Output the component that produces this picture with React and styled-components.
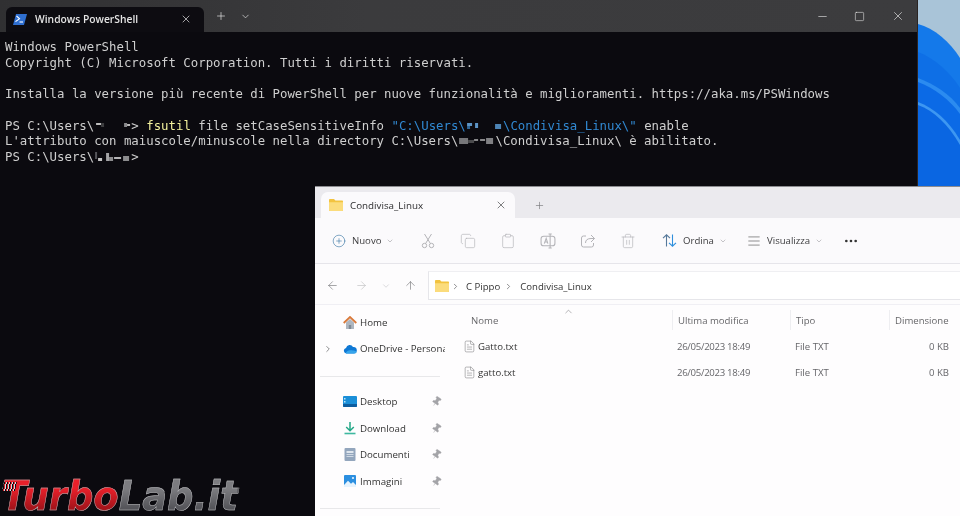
import styled, { createGlobalStyle } from "styled-components";
import {
  ArrowLeft, ArrowRight, ArrowUp, AlignJustify, ChevronDown, ChevronRight, ChevronUp,
  CirclePlus, Clipboard, Copy, FileText, Minus, MoreHorizontal, Pin, Plus,
  Square, Trash2, X,
} from "lucide-react";

const GlobalStyle = createGlobalStyle`
  html, body { margin: 0; padding: 0; background: #0b0a0f; }
  * { box-sizing: border-box; }
`;

const Desktop = styled.div`
  position: relative;
  width: 960px;
  height: 516px;
  overflow: hidden;
  background: #0a6de8;
  font-family: "Open Sans", "Noto Sans", sans-serif;
  filter: blur(0.35px);
`;

const Wallpaper = styled.svg`
  position: absolute;
  top: 0;
  right: 0;
  width: 42px;
  height: 190px;
`;

const TerminalWindow = styled.section`
  position: absolute;
  top: 0;
  left: 0;
  width: 918px;
  height: 516px;
  display: flex;
  flex-direction: column;
  background: #0b0a0f;
  border-right: 1px solid #2b2422;
`;

const TermBar = styled.header`
  height: 32px;
  flex: none;
  display: flex;
  align-items: flex-end;
  padding-left: 6px;
  background: linear-gradient(90deg, #303032, #3b3b3d 40%, #3c3c3e);
  color: #e8e8e8;
`;

const TermTab = styled.div`
  width: 198px;
  height: 25px;
  display: flex;
  align-items: center;
  padding: 0 12px 1px 7px;
  background: #0d0c11;
  border-radius: 6px 6px 0 0;
  font-size: 10.3px;
  font-weight: 600;
  color: #e4e4e4;
`;

const TabLabel = styled.span`
  flex: 1;
  margin-left: 8px;
`;

const BarButton = styled.span`
  display: flex;
  align-items: center;
  justify-content: center;
  align-self: center;
  width: ${(p) => p.$w}px;
  margin-left: ${(p) => p.$ml || 0}px;
  color: #eeeeee;
`;

const Console = styled.pre`
  flex: 1;
  margin: 0;
  padding: 8px 5px;
  font-family: "DejaVu Sans Mono", "Liberation Mono", monospace;
  font-size: 12.35px;
  line-height: 15.7px;
  color: #cfcfcf;
`;

const Keyword = styled.span`
  color: #f3f19d;
`;

const Quoted = styled.span`
  color: #3189d2;
`;

const MosaicBox = styled.svg`
  display: inline-block;
  width: ${(p) => p.$chars}ch;
  height: 12px;
  vertical-align: -2px;
`;

const Mosaic = ({ chars, cells }) => (
  <MosaicBox $chars={chars} viewBox={`0 0 ${chars * 7.4} 12`}>
    {cells.map(([x, y, w, h, c], i) => (
      <rect key={i} x={x} y={y} width={w} height={h} fill={c} />
    ))}
  </MosaicBox>
);

const ExplorerWindow = styled.section`
  position: absolute;
  left: 315px;
  top: 186px;
  width: 645px;
  height: 330px;
  display: flex;
  flex-direction: column;
  background: #fefdfe;
  border-top: 1px solid #8c8c90;
  color: #2c2c2e;
`;

const ExTabs = styled.div`
  height: 31px;
  flex: none;
  display: flex;
  align-items: flex-end;
  padding-left: 6px;
  background: #ebeaee;
`;

const ExTab = styled.div`
  width: 194px;
  height: 26px;
  display: flex;
  align-items: center;
  padding: 0 8px;
  background: #fbfafc;
  border-radius: 7px 7px 0 0;
  font-size: 9.8px;
`;

const ExTabLabel = styled.span`
  flex: 1;
  margin: 1px 0 0 7px;
`;

const ExPlus = styled.span`
  height: 26px;
  margin-left: 19px;
  display: flex;
  align-items: center;
  color: #77777a;
`;

const ExToolbar = styled.div`
  height: 46px;
  flex: none;
  display: flex;
  align-items: center;
  padding-left: 17px;
  background: #fbfafc;
  border-bottom: 1px solid #e6e5ea;
  font-size: 9.6px;
  color: #3c3c3e;
`;

const ToolButton = styled.div`
  width: ${(p) => p.$w}px;
  margin-left: ${(p) => p.$ml || 0}px;
  display: flex;
  align-items: center;
  gap: ${(p) => p.$gap || 6}px;
`;

const Caret = styled(ChevronDown)`
  margin-left: -1px;
  color: #a8a8ac;
`;

const ToolCell = styled.div`
  width: 40px;
  display: flex;
  justify-content: center;
  color: #b4b4b8;
`;

const AddressRow = styled.div`
  height: 41px;
  flex: none;
  display: flex;
  align-items: center;
  padding: 3px 0 0 9px;
  background: #fdfcfd;
  border-bottom: 1px solid #f0eff4;
`;

const NavCell = styled.div`
  width: ${(p) => p.$w}px;
  margin-left: ${(p) => p.$ml || 0}px;
  display: flex;
  justify-content: center;
  color: ${(p) => (p.$off ? "#b9b9bc" : "#6a6a6d")};
`;

const AddressBox = styled.div`
  flex: 1;
  height: 29px;
  margin-left: 11px;
  display: flex;
  align-items: center;
  padding: 1px 0 0 6px;
  background: #fff;
  border-left: 1px solid #e6e6ea;
  border-top: 1px solid #efeff2;
  border-bottom: 1px solid #e6e6ea;
  font-size: 9.6px;
  color: #333;
`;

const Crumb = styled.span`
  margin: 0 ${(p) => p.$right}px 0 ${(p) => p.$left}px;
  color: #6b6b6e;
  display: flex;
`;

const ExBody = styled.div`
  flex: 1;
  min-height: 0;
  display: grid;
  grid-template-columns: 130px 1fr;
`;

const Sidebar = styled.nav`
  padding-top: 4px;
  overflow: hidden;
  font-size: 9.7px;
  color: #333;
`;

const SideItem = styled.div`
  height: 26.4px;
  display: flex;
  align-items: center;
  padding-left: 8px;
  white-space: nowrap;
`;

const SideChevron = styled.span`
  width: 20px;
  display: flex;
  color: #77777a;
`;

const SideLabel = styled.span`
  flex: 1;
  min-width: 0;
  margin-left: 3px;
`;

const SidePin = styled(Pin)`
  margin-right: 3px;
  color: #a4a4a8;
  fill: #a4a4a8;
  transform: rotate(35deg);
`;

const SideDivider = styled.hr`
  margin: 14px 5px 12px;
  width: 120px;
  border: none;
  border-top: 1px solid #e8e8ea;
`;

const FileList = styled.div`
  position: relative;
  font-size: 9.6px;
`;

const FileColumns = styled.div`
  display: grid;
  grid-template-columns: 227px 118px 99px 66px;
  align-items: center;
  height: ${(p) => p.$h}px;
`;

const HeadCell = styled.div`
  height: 20px;
  margin-top: 2px;
  display: flex;
  align-items: center;
  padding-left: ${(p) => p.$pad || 5}px;
  border-left: ${(p) => (p.$first ? "none" : "1px solid #eeeef1")};
  color: #67676a;
`;

const SortMark = styled(ChevronUp)`
  position: absolute;
  top: 1px;
  left: 118px;
  color: #77777a;
`;

const NameCell = styled.div`
  display: flex;
  align-items: center;
  gap: 2px;
  padding-left: 18px;
  color: #333;
`;

const DataCell = styled.div`
  padding-left: 5px;
  color: #66666a;
`;

const DateCell = styled(DataCell)`
  letter-spacing: -0.3px;
`;

const SizeCell = styled(DataCell)`
  padding-right: 6px;
  text-align: right;
`;

const Logo = styled.div`
  position: absolute;
  left: 2px;
  top: 476px;
  font-family: "DejaVu Sans", "Liberation Sans", sans-serif;
  font-size: 41px;
  font-weight: 700;
  font-style: italic;
  line-height: 40px;
  white-space: nowrap;
  transform-origin: left center;
  transform: scaleX(0.9);
  -webkit-text-stroke: 0.5px #b9b9bc;
`;

const LogoStripes = styled.div`
  position: absolute;
  left: 3px;
  top: 482px;
  width: 13px;
  height: 9px;
  transform: skewX(-12deg);
  background: repeating-linear-gradient(90deg, #0b0a0f 0 1px, #e0222b 1px 2px, #d9d9dc 2px 3px);
`;

const LogoRed = styled.span`
  background: linear-gradient(#e8202a 35%, #a5141b 75%);
  -webkit-background-clip: text;
  background-clip: text;
  color: transparent;
`;

const LogoGrey = styled.span`
  background: linear-gradient(#7c7c80 35%, #55555a 75%);
  -webkit-background-clip: text;
  background-clip: text;
  color: transparent;
`;

const PowerShellIcon = () => (
  <svg width="14" height="11" viewBox="0 0 14 11">
    <path d="M3 0h11l-3 11H0z" fill="#2f6fd0" />
    <path d="M3.5 2l3 2.6-4 3" fill="none" stroke="#fff" strokeWidth="1.1" />
    <path d="M6.5 8h3.5" stroke="#fff" strokeWidth="1.1" />
  </svg>
);

const FolderIcon = () => (
  <svg width="14" height="12" viewBox="0 0 14 12">
    <path d="M0 1.2C0 .5.4 0 1 0h4l1.4 1.5H13c.6 0 1 .4 1 1V11c0 .6-.4 1-1 1H1c-.6 0-1-.4-1-1z" fill="#f2c33f" />
    <path d="M0 3.2h14V11c0 .6-.4 1-1 1H1c-.6 0-1-.4-1-1z" fill="#fbdc7c" />
  </svg>
);

const HomeIcon = () => (
  <svg width="14" height="13" viewBox="0 0 14 13">
    <path d="M3 6.5L7 3l4 3.5V13H3z" fill="#aeb6c0" />
    <path d="M5.8 9h2.4v4H5.8z" fill="#7f8994" />
    <path d="M.7 7L7 1l6.3 6" fill="none" stroke="#d9793a" strokeWidth="1.8" />
  </svg>
);

const CloudIcon = () => (
  <svg width="14" height="10" viewBox="0 0 14 10">
    <path d="M3.2 9.5A2.8 2.8 0 0 1 3 4a3.8 3.8 0 0 1 7-1 3.2 3.2 0 0 1 1 6.5z" fill="#0f78d4" />
    <path d="M3.2 9.5C2 9.5 4 6.5 7 6.3c3-.2 6.5.8 6.5 1.6 0 1-1.2 1.6-2.5 1.6z" fill="#36a5ec" />
  </svg>
);

const DesktopIcon = () => (
  <svg width="14" height="11" viewBox="0 0 14 11">
    <rect width="14" height="11" rx="1" fill="#1b8fd8" />
    <path d="M0 8h14v2a1 1 0 0 1-1 1H1a1 1 0 0 1-1-1z" fill="#0d5d9f" />
    <rect x="1" y="2" width="1.5" height="1.5" fill="#bfe6fa" />
    <rect x="1" y="5" width="1.5" height="1.5" fill="#bfe6fa" />
  </svg>
);

const DownloadIcon = () => (
  <svg width="14" height="14" viewBox="0 0 14 14">
    <path d="M7 1v8.5M3.2 6L7 9.8 10.8 6" fill="none" stroke="#25a888" strokeWidth="1.5" />
    <path d="M1.5 12.5h11" stroke="#3fb8a0" strokeWidth="1.6" />
  </svg>
);

const DocumentsIcon = () => (
  <svg width="14" height="13" viewBox="0 0 14 13">
    <rect x="1.5" width="11" height="13" rx="1" fill="#93a6bd" />
    <path d="M3.5 3h7v2h-7z" fill="#dfe6ee" />
    <path d="M3.5 6.5h7M3.5 8.5h7" stroke="#dfe6ee" strokeWidth=".8" />
  </svg>
);

const PicturesIcon = () => (
  <svg width="14" height="12" viewBox="0 0 14 12">
    <rect x="1" width="12" height="12" rx="1" fill="#2c8fe0" />
    <path d="M1 10l4-4.2 3 3 2-1.8 3 3V12H1z" fill="#e6f3fd" />
    <circle cx="10" cy="3" r="1.1" fill="#e6f3fd" />
  </svg>
);

const CutIcon = ({ size }) => (
  <svg width={size} height={size} viewBox="0 0 16 16" fill="none" stroke="currentColor" strokeWidth="1">
    <circle cx="4.5" cy="12.5" r="2.2" />
    <circle cx="11.5" cy="12.5" r="2.2" />
    <path d="M5.6 10.5L11.5 1M10.4 10.5L4.5 1" />
  </svg>
);

const RenameIcon = ({ size }) => (
  <svg width={size} height={size} viewBox="0 0 15 15" fill="none" stroke="currentColor" strokeWidth="1">
    <rect x="1" y="3" width="13" height="9" rx="2.5" />
    <path d="M9.5 1v13M8 1h3M8 14h3M4 10l1.8-5 1.6 5M4.6 8.5h2.4" />
  </svg>
);

const ShareIcon = ({ size }) => (
  <svg width={size} height={size} viewBox="0 0 16 16" fill="none" stroke="currentColor" strokeWidth="1">
    <path d="M6 3H3.5a2 2 0 0 0-2 2v7a2 2 0 0 0 2 2h8a2 2 0 0 0 2-2v-2" />
    <path d="M5.5 10c0-3 2-4.5 5.5-4.5h3.5M11 2l3.5 3.5L11 9" />
  </svg>
);

const SortIcon = () => (
  <svg width="15" height="13" viewBox="0 0 15 13" fill="none" strokeWidth="1.1">
    <path d="M4.5 12.5V.8M1 4.2L4.5.8 8 4.2" stroke="#56789a" />
    <path d="M10.5.5v11.7M7 8.8l3.5 3.4L14 8.8" stroke="#2f8fdc" />
  </svg>
);

const sidebarPinned = [
  ["Desktop", DesktopIcon],
  ["Download", DownloadIcon],
  ["Documenti", DocumentsIcon],
  ["Immagini", PicturesIcon],
];

const files = ["Gatto.txt", "gatto.txt"];

const toolIcons = [CutIcon, Copy, Clipboard, RenameIcon, ShareIcon, Trash2];

const App = () => (
  <>
    <GlobalStyle />
    <Desktop>
      <Wallpaper viewBox="0 0 42 190" preserveAspectRatio="none">
        <rect width="42" height="190" fill="#a9c4d8" />
        <path d="M0 24C16 28 32 42 42 58V190H0z" fill="#1479ea" />
        <path d="M0 52C16 58 32 72 42 88V190H0z" fill="#0e6fe6" />
        <path d="M0 78C16 84 32 94 42 108V190H0z" fill="#2b8bf0" />
        <path d="M0 82C16 88 32 100 42 114V190H0z" fill="#0b6ae6" />
        <path d="M0 102C16 108 30 120 42 140V190H0z" fill="#3d97f2" />
        <path d="M0 105C16 111 30 124 42 145V190H0z" fill="#0a66e2" />
      </Wallpaper>

      <TerminalWindow>
        <TermBar>
          <TermTab>
            <PowerShellIcon />
            <TabLabel>Windows PowerShell</TabLabel>
            <X size={12} strokeWidth={1.4} />
          </TermTab>
          <BarButton $w={14} $ml={10}><Plus size={12} strokeWidth={1.3} /></BarButton>
          <BarButton $w={12} $ml={11}><ChevronDown size={11} strokeWidth={1.4} /></BarButton>
          <BarButton $w={14} $ml={564}><Minus size={13} strokeWidth={1.1} /></BarButton>
          <BarButton $w={14} $ml={23}><Square size={11} strokeWidth={1.2} /></BarButton>
          <BarButton $w={14} $ml={25}><X size={14} strokeWidth={1.1} /></BarButton>
        </TermBar>
        <Console>
{`Windows PowerShell
Copyright (C) Microsoft Corporation. Tutti i diritti riservati.

Installa la versione più recente di PowerShell per nuove funzionalità e miglioramenti. https://aka.ms/PSWindows

PS C:\\Users\\`}<Mosaic chars={5} cells={[[2, 3, 5, 2, "#bdbdbd"], [7, 3, 3, 4, "#3c3c3e"], [30, 3, 3, 4, "#8a8a8c"], [33, 4, 3, 2, "#bdbdbd"]]} />
<>{"> "}</><Keyword>fsutil</Keyword>{" file setCaseSensitiveInfo "}<Quoted>{'"C:\\Users\\'}<Mosaic chars={5} cells={[[1, 3, 5, 3, "#5c93c4"], [1, 6, 3, 3, "#2f6798"], [9, 3, 3, 5, "#5c93c4"], [29, 4, 6, 5, "#4d84b5"]]} />{'\\Condivisa_Linux\\"'}</Quoted>{` enable
L'attributo con maiuscole/minuscole nella directory C:\\Users\\`}<Mosaic chars={5} cells={[[1, 3, 9, 6, "#77777a"], [10, 5, 6, 3, "#4a4a4c"], [16, 4, 4, 2, "#88888a"], [22, 4, 5, 2, "#88888a"], [28, 3, 7, 6, "#808083"]]} />{`\\Condivisa_Linux\\ è abilitato.
PS C:\\Users\\`}<Mosaic chars={5} cells={[[1, 1, 2, 7, "#55555a"], [4, 7, 4, 3, "#c4c4c4"], [12, 2, 3, 8, "#a4a4a6"], [15, 6, 4, 4, "#8c8c8e"], [20, 6, 7, 2, "#b4b4b6"], [29, 5, 6, 5, "#8c8c8e"]]} />{">"}
        </Console>
      </TerminalWindow>

      <Logo>
        <LogoRed>Turbo</LogoRed>
        <LogoGrey>Lab.it</LogoGrey>
      </Logo>
      <LogoStripes />

      <ExplorerWindow>
        <ExTabs>
          <ExTab>
            <FolderIcon />
            <ExTabLabel>Condivisa_Linux</ExTabLabel>
            <X size={12} strokeWidth={1.2} />
          </ExTab>
          <ExPlus><Plus size={11} strokeWidth={1.4} /></ExPlus>
        </ExTabs>

        <ExToolbar>
          <ToolButton $w={76} $gap={6}>
            <CirclePlus size={14} strokeWidth={1} color="#2c6f9e" />
            <span>Nuovo</span>
            <Caret size={8} />
          </ToolButton>
          {toolIcons.map((Icon, i) => (
            <ToolCell key={i}>
              <Icon size={16} strokeWidth={1} />
            </ToolCell>
          ))}
          <ToolButton $w={85} $ml={14}>
            <SortIcon />
            <span>Ordina</span>
            <Caret size={8} />
          </ToolButton>
          <ToolButton $w={96}>
            <AlignJustify size={14} strokeWidth={1} color="#444" />
            <span>Visualizza</span>
            <Caret size={8} />
          </ToolButton>
          <MoreHorizontal size={16} color="#333" strokeWidth={2} />
        </ExToolbar>

        <AddressRow>
          <NavCell $w={16}><ArrowLeft size={13} strokeWidth={1.1} /></NavCell>
          <NavCell $w={16} $off $ml={13}><ArrowRight size={13} strokeWidth={1.1} /></NavCell>
          <NavCell $w={12} $off $ml={11}><ChevronDown size={10} strokeWidth={1.2} /></NavCell>
          <NavCell $w={14} $ml={11}><ArrowUp size={13} strokeWidth={1.1} /></NavCell>
          <AddressBox>
            <FolderIcon />
            <Crumb $left={2} $right={6}><ChevronRight size={9} /></Crumb>
            <span>C Pippo</span>
            <Crumb $left={4} $right={7}><ChevronRight size={9} /></Crumb>
            <span>Condivisa_Linux</span>
          </AddressBox>
        </AddressRow>

        <ExBody>
          <Sidebar>
            <SideItem>
              <SideChevron />
              <HomeIcon />
              <SideLabel>Home</SideLabel>
            </SideItem>
            <SideItem>
              <SideChevron><ChevronRight size={10} /></SideChevron>
              <CloudIcon />
              <SideLabel>OneDrive - Persona</SideLabel>
            </SideItem>
            <SideDivider />
            {sidebarPinned.map(([label, Icon]) => (
              <SideItem key={label}>
                <SideChevron />
                <Icon />
                <SideLabel>{label}</SideLabel>
                <SidePin size={11} strokeWidth={1} />
              </SideItem>
            ))}
            <SideDivider />
          </Sidebar>

          <FileList>
            <SortMark size={11} strokeWidth={1.2} />
            <FileColumns $h={28}>
              <HeadCell $first $pad={26}>Nome</HeadCell>
              <HeadCell>Ultima modifica</HeadCell>
              <HeadCell>Tipo</HeadCell>
              <HeadCell>Dimensione</HeadCell>
            </FileColumns>
            {files.map((name) => (
              <FileColumns $h={26} key={name}>
                <NameCell>
                  <FileText size={13} strokeWidth={1} color="#77777a" />
                  <span>{name}</span>
                </NameCell>
                <DateCell>26/05/2023 18:49</DateCell>
                <DataCell>File TXT</DataCell>
                <SizeCell>0 KB</SizeCell>
              </FileColumns>
            ))}
          </FileList>
        </ExBody>
      </ExplorerWindow>
    </Desktop>
  </>
);

export default App;
